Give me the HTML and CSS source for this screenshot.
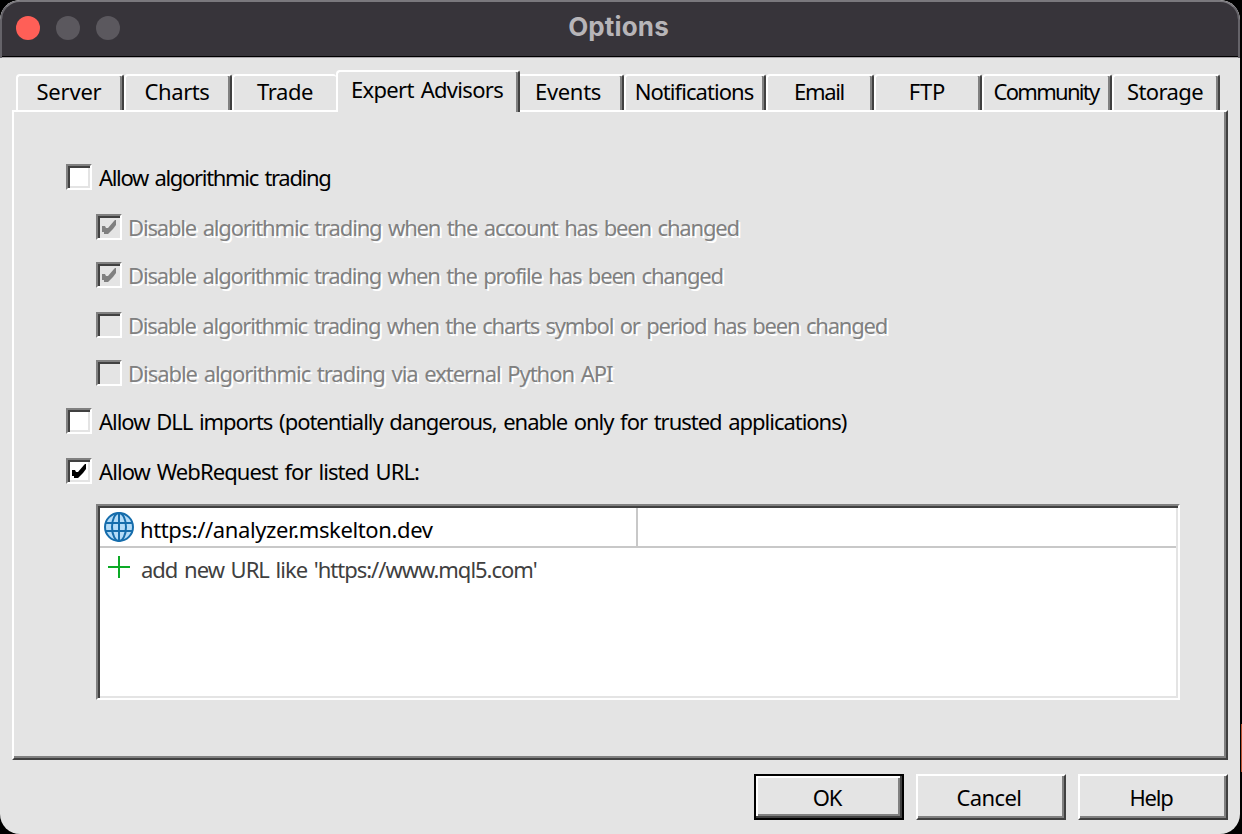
FILE: index.html
```html
<!DOCTYPE html>
<html lang="en">
<head>
<meta charset="utf-8">
<title>Options</title>
<link rel="stylesheet" href="styles.css">
</head>
<body>
<svg width="0" height="0" class="defs"><defs>
<path id="tick" d="M0 6h3l1 2h2l6-7 1-1h1v5l-3 4-5 5h-4v-2h-2z"/>
</defs></svg>
<main class="window">
  <header class="titlebar">
    <div class="lights"><i class="light close"></i><i class="light"></i><i class="light"></i></div>
    <h1>Options</h1>
  </header>
  <nav class="tabs">
    <div class="tab w108"><span class="t-server">Server</span></div>
    <div class="tab w108"><span class="t-charts">Charts</span></div>
    <div class="tab before-active"><span class="t-trade">Trade</span></div>
    <div class="tab active"><span class="t-expert">Expert Advisors</span></div>
    <div class="tab after-active"><span class="t-events">Events</span></div>
    <div class="tab w142"><span class="t-notifications">Notifications</span></div>
    <div class="tab w108"><span class="t-email">Email</span></div>
    <div class="tab w108"><span class="t-ftp">FTP</span></div>
    <div class="tab w130"><span class="t-community">Community</span></div>
    <div class="tab w108"><span class="t-storage">Storage</span></div>
  </nav>
  <section class="panel">
    <div class="options">
      <label class="option"><i class="box"></i><span class="o-algo">Allow algorithmic trading</span></label>
      <label class="option off"><i class="box"><svg width="14" height="14"><use href="#tick"/></svg></i><span class="o-account">Disable algorithmic trading when the account has been changed</span></label>
      <label class="option off tight"><i class="box"><svg width="14" height="14"><use href="#tick"/></svg></i><span class="o-profile">Disable algorithmic trading when the profile has been changed</span></label>
      <label class="option off"><i class="box"></i><span class="o-symbol">Disable algorithmic trading when the charts symbol or period has been changed</span></label>
      <label class="option off tight"><i class="box"></i><span class="o-python">Disable algorithmic trading via external Python API</span></label>
      <label class="option tight"><i class="box"></i><span class="o-dll">Allow DLL imports (potentially dangerous, enable only for trusted applications)</span></label>
      <label class="option"><i class="box"><svg width="14" height="14"><use href="#tick"/></svg></i><span class="o-web">Allow WebRequest for listed URL:</span></label>
    </div>
    <div class="list">
      <div class="row">
        <div class="cell url">
          <svg class="globe" width="30" height="30" viewBox="0 0 30 30" fill="none" stroke="#166dac" stroke-width="2"><circle cx="15" cy="15" r="14" fill="#b5dcf8"/><ellipse cx="15" cy="15" rx="7" ry="14"/><path d="M15 1v28M2 11h26M2 19h26"/></svg>
          <span class="u-dev">https://analyzer.mskelton.dev</span>
        </div>
        <div class="cell"></div>
      </div>
      <div class="row add">
        <svg class="plus" width="22" height="22" viewBox="0 0 22 22"><path d="M11 0v22M0 11h22" stroke="#0caa26" stroke-width="2"/></svg>
        <span class="u-add">add new URL like 'https://www.mql5.com'</span>
      </div>
    </div>
  </section>
  <footer class="buttons">
    <button class="btn default"><span class="b-ok">OK</span></button>
    <button class="btn"><span class="b-cancel">Cancel</span></button>
    <button class="btn"><span class="b-help">Help</span></button>
  </footer>
</main>
<div class="edge"></div>
</body>
</html>
```
FILE: styles.css
```css
* { box-sizing: border-box; }
body { margin: 0; width: 1242px; height: 834px; overflow: hidden; background: #000; font: 22px/26px "Noto Sans", sans-serif; color: #000; display: flex; }
.defs { position: absolute; }
span { white-space: nowrap; }
.window { width: 1240px; height: 834px; background: #e4e4e4; border-radius: 20px; overflow: hidden; }
.edge { width: 1px; height: 48px; margin: 724px 0 0 1px; background: #b8502f; }

.titlebar { height: 58px; background: #37343a; border: 2px solid #656369; border-top-color: #7a787d; border-bottom: 0; border-radius: 20px 20px 0 0; box-shadow: inset 0 -1px #aaa7ab, inset 0 -2px #000; display: grid; grid-template-columns: 1fr auto 1fr; }
.lights { display: flex; gap: 16px; padding: 14px 0 0 14px; }
.light { width: 24px; height: 24px; border-radius: 50%; background: #5b585e; }
.light.close { background: #ff5f57; }
h1 { margin: 0; padding-right: 3px; font: 700 26px/50px Inter, sans-serif; letter-spacing: 0.15px; color: #b7b5b8; }

.tabs { display: flex; align-items: flex-end; height: 54px; padding-left: 16px; position: relative; z-index: 1; }
.tab { height: 36px; margin-bottom: 2px; border-top: 2px solid #fff; border-left: 2px solid #fff; border-right: 2px solid #404040; box-shadow: inset -2px 0 #808080; display: flex; justify-content: center; padding: 2px 2px 0 0; border-top-left-radius: 4px; border-top-right-radius: 3px; }
.w108 { width: 108px; }
.w130 { width: 130px; }
.w142 { width: 142px; }
.before-active { width: 104px; border-right: 0; box-shadow: none; padding-right: 0; }
.active { width: 184px; height: 42px; margin-bottom: 0; padding-top: 4px; background: #e4e4e4; }
.after-active { width: 104px; border-left: 0; border-top-left-radius: 0; padding-right: 6px; }

.panel { width: 1216px; height: 650px; margin: -2px 0 0 12px; border: 2px solid #fff; border-right-color: #404040; border-bottom-color: #404040; box-shadow: inset -2px -2px #808080; padding: 52px 0 0 52px; }
.options { display: flex; flex-direction: column; }
.option { display: flex; height: 26px; margin-bottom: 24px; gap: 7px; }
.tight { margin-top: -2px; }
.box { width: 26px; height: 26px; flex: none; border: 2px solid #808080; border-right-color: #fff; border-bottom-color: #fff; box-shadow: inset 2px 2px #404040, inset -2px -2px #e4e4e4; background: #fff; padding: 4px; }
.box svg { display: block; }
.off { padding-left: 30px; gap: 6px; color: #808080; text-shadow: 2px 2px #fff; }
.off .box { background: #e4e4e4; }
.off svg { fill: #808080; }

.list { width: 1084px; height: 196px; margin: -4px 0 0 30px; border: 2px solid #808080; border-right-color: #fff; border-bottom-color: #fff; box-shadow: inset 2px 2px #404040, inset -2px -2px #e4e4e4; background: #fff; padding: 2px; }
.row { display: flex; height: 40px; border-bottom: 2px solid #c8c8c8; }
.url { width: 538px; border-right: 2px solid #c8c8c8; display: flex; align-items: flex-end; gap: 6px; padding: 4px; }
.add { border: 0; color: #404040; padding: 8px; gap: 11px; }

.buttons { display: flex; justify-content: flex-end; gap: 12px; padding: 14px 12px 0 0; }
.btn { width: 150px; height: 46px; padding: 0 4px 0 0; font: inherit; color: #000; background: #e4e4e4; border: 2px solid #fff; border-right-color: #404040; border-bottom-color: #404040; box-shadow: inset -2px -2px #808080; }
.default { border-color: #000; box-shadow: inset -2px -2px #404040, inset 2px 2px #fff, inset -4px -4px #808080; }

.t-server { letter-spacing: -0.2px; }
.t-charts { letter-spacing: -0.4px; }
.t-trade { letter-spacing: -0.4px; }
.t-expert { letter-spacing: -0.7px; word-spacing: 2px; }
.t-events { letter-spacing: -0.3px; }
.t-notifications { letter-spacing: -0.95px; }
.t-email { letter-spacing: -1.3px; }
.t-ftp { letter-spacing: -0.2px; }
.t-community { letter-spacing: -1.7px; }
.t-storage { letter-spacing: -0.6px; }
.option span, .u-add { word-spacing: 2px; }
.o-algo { letter-spacing: -1.31px; }
.o-account { letter-spacing: -1.164px; }
.o-profile { letter-spacing: -1.18px; }
.o-symbol { letter-spacing: -1.208px; }
.o-python { letter-spacing: -1.04px; }
.o-dll { letter-spacing: -1.025px; }
.o-web { letter-spacing: -0.92px; }
.u-dev { letter-spacing: -0.38px; }
.u-add { letter-spacing: -1.01px; }
.b-ok { letter-spacing: -1.2px; }
.b-cancel { letter-spacing: -0.6px; }
.b-help { letter-spacing: -1.2px; }
```
